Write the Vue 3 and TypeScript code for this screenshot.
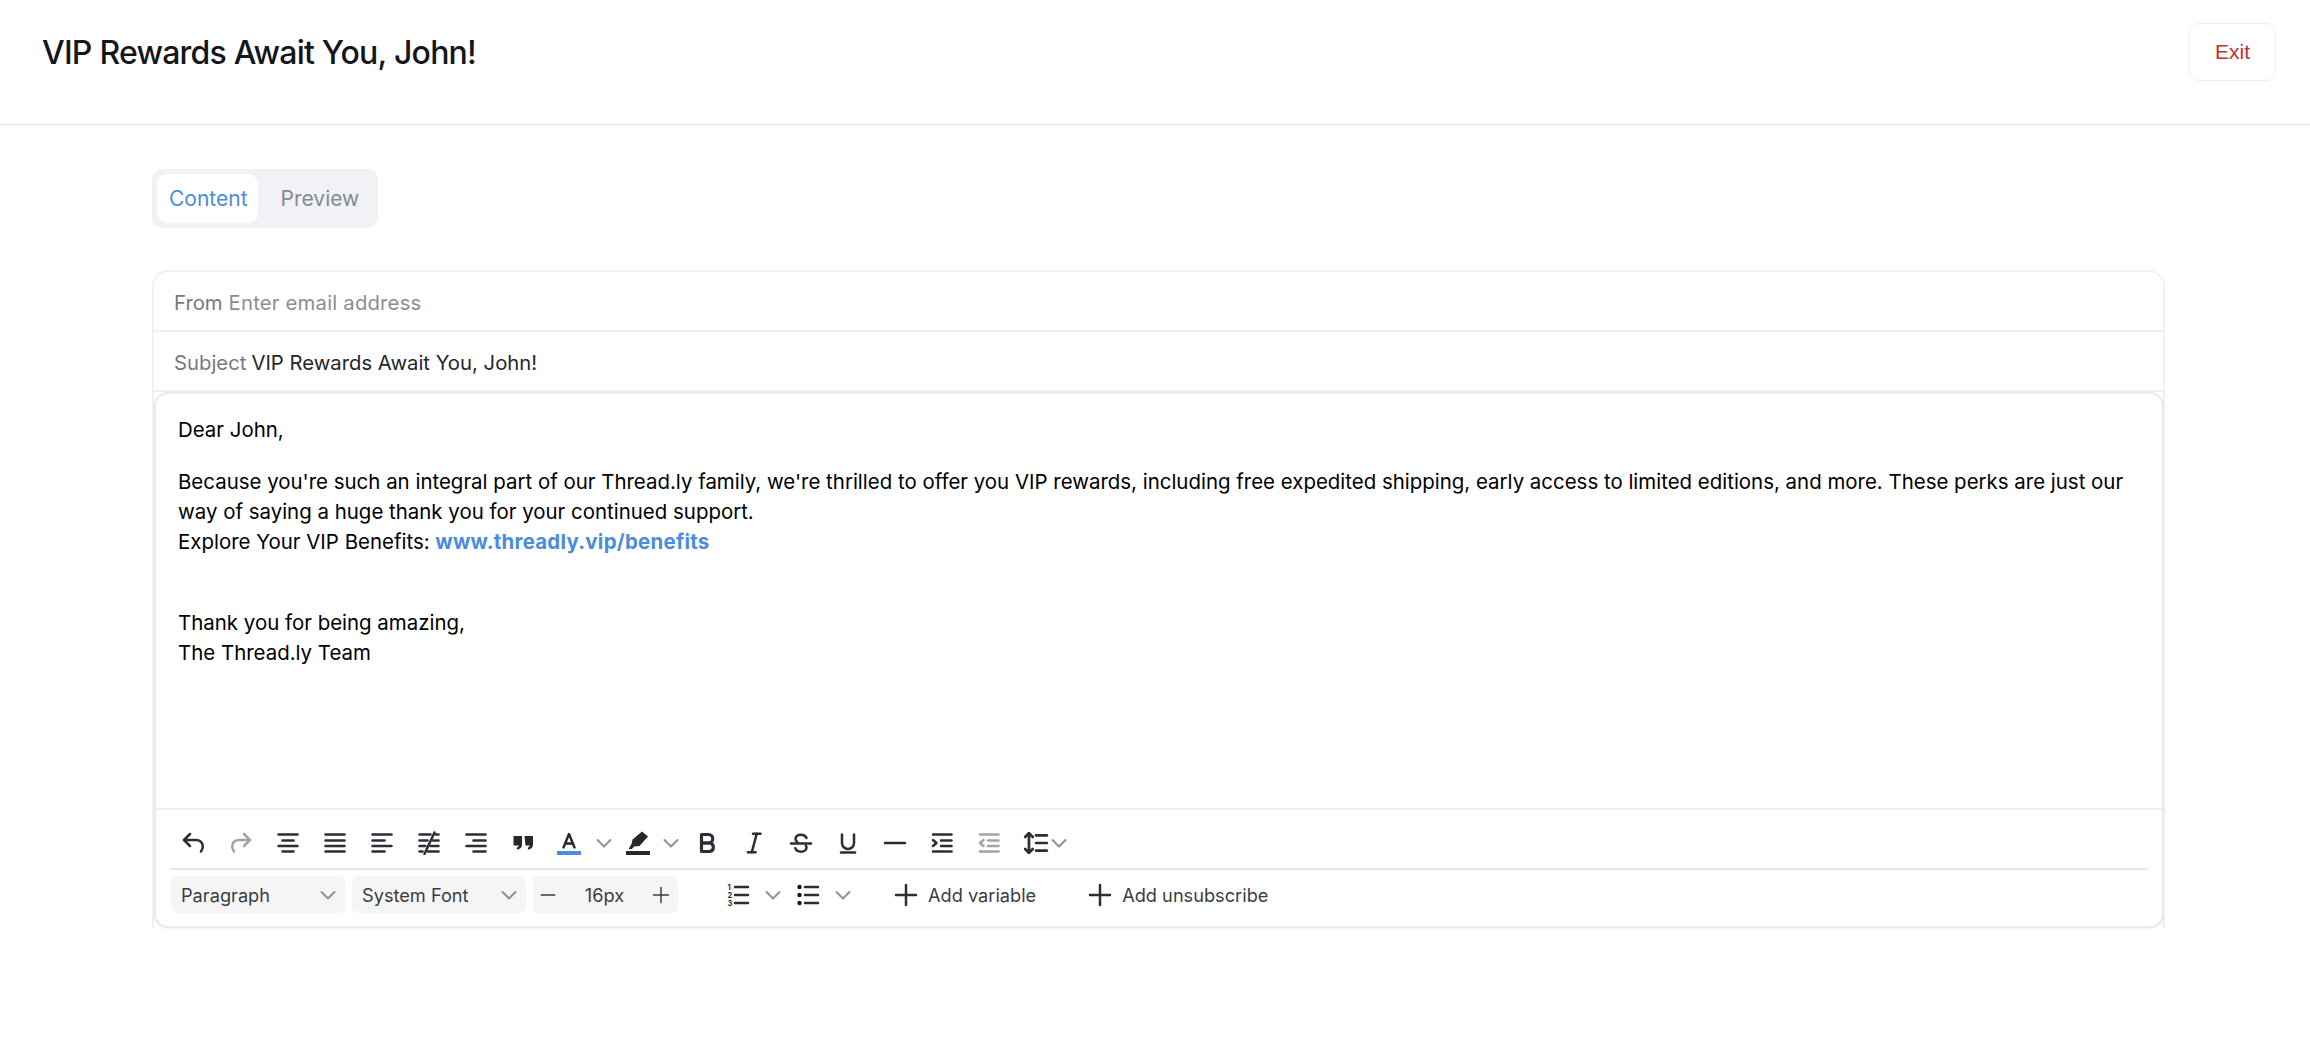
<script setup lang="ts">
interface Tool { id: string; paths: string[]; fills?: string[]; muted?: boolean; heavy?: boolean }

const row1: Tool[] = [
  { id: 'undo', paths: ['M8 3 2 9l6 6', 'M2 9h12c3.800 0 6.800 2.600 6.800 6.200 0 1.900-.7 3.700-1.800 5.300'] },
  { id: 'redo', muted: true, paths: ['M15 3l6 6-6 6', 'M21 9H10c-3.800 0-6.800 2.600-6.800 6.200 0 1.900.7 3.700 1.800 5.300'] },
  { id: 'center', paths: ['M2.500 3.500h19', 'M6.500 9.500h11', 'M2.500 15h19', 'M6.500 20.500h11'] },
  { id: 'justify', paths: ['M2.500 3.500h19', 'M2.500 9.500h19', 'M2.500 15h19', 'M2.500 20.500h19'] },
  { id: 'left', paths: ['M2.500 3.500h19', 'M2.500 9.500h12', 'M2.500 15h19', 'M2.500 20.500h12'] },
  { id: 'none', paths: ['M2.500 3.500h11', 'M18.500 3.500h3', 'M2.500 9.500h8', 'M16 9.500h5.500', 'M2.500 15h6', 'M13.500 15h8', 'M2.500 20.500h3', 'M11 20.500h10.500', 'M17.500 1.500 7.500 23'] },
  { id: 'right', paths: ['M2.500 3.500h19', 'M9.500 9.500h12', 'M2.500 15h19', 'M9.500 20.500h12'] },
  { id: 'quote', paths: [], fills: ['M2.500 5h8.500v8.500c0 2.600-1.500 4.200-4.500 5.300l-.9-1.900c1.400-.7 2.100-1.500 2.200-2.400H2.500z', 'M13.500 5H22v8.500c0 2.600-1.500 4.200-4.500 5.300l-.9-1.900c1.400-.7 2.100-1.500 2.200-2.400h-4.300z'] }
]

const row1b: Tool[] = [
  { id: 'bold', heavy: true, paths: ['M6.500 3.500h7a4.200 4.200 0 0 1 0 8.500h-7z', 'M6.500 12h8.200a4.300 4.300 0 0 1 0 8.500H6.500z'] },
  { id: 'italic', paths: ['M11 2.800h7.500', 'M6 21.200h7.500', 'M14.700 2.800 9.800 21.200'] },
  { id: 'strike', paths: ['M2 12.500h20', 'M17.500 7c-.8-2-3-3.300-5.500-3.300-3 0-5.500 1.600-5.500 4.200 0 1.300.6 2.300 1.800 3', 'M16.800 14.500c.5.700.7 1.300.7 2 0 2.600-2.500 4.200-5.500 4.200-2.800 0-5-1.300-5.700-3.500'] },
  { id: 'underline', paths: ['M6 3.500v8.500a6 6 0 0 0 12 0V3.500', 'M5 21.500h14'] },
  { id: 'hr', paths: ['M2 12h20'] },
  { id: 'indent', paths: ['M3 3.500h18.500', 'M11 9.500h10.500', 'M11 15h10.500', 'M3 20.500h18.500', 'M3 9l3.500 3L3 15'] },
  { id: 'outdent', muted: true, paths: ['M3 3.500h18.500', 'M11 9.500h10.500', 'M11 15h10.500', 'M3 20.500h18.500', 'M6.500 9 3 12l3.500 3'] }
]

const chevron = 'M5.500 9 12 15.500 18.500 9'
const lineHeightPaths = ['M5.500 3v18', 'M2 6.500 5.500 3 9 6.500', 'M2 17.500 5.500 21 9 17.500', 'M12 5h10', 'M12 12h10', 'M12 19h10']
const plusPaths = ['M12 2v20', 'M2 12h20']
</script>

<template>
  <div class="page">
    <header class="topbar">
      <h1 class="title">VIP Rewards Await You, John!</h1>
      <button class="exit" type="button">Exit</button>
    </header>

    <main class="main">
      <div class="tabs">
        <button class="tab active" type="button">Content</button>
        <button class="tab" type="button">Preview</button>
      </div>

      <section class="card">
        <div class="field"><span class="label">From</span><span class="placeholder">Enter email address</span></div>
        <div class="field"><span class="label">Subject</span><span class="value">VIP Rewards Await You, John!</span></div>

        <div class="editor">
          <div class="body">
            <p>Dear John,</p>
            <p>Because you're such an integral part of our Thread.ly family, we're thrilled to offer you VIP rewards, including free expedited shipping, early access to limited editions, and more. These perks are just our way of saying a huge thank you for your continued support.<br>Explore Your VIP Benefits: <a class="link">www.threadly.vip/benefits</a></p>
            <p class="spacer"></p>
            <p>Thank you for being amazing,<br>The Thread.ly Team</p>
          </div>

          <div class="toolbar">
            <div class="row row-icons">
              <span v-for="t in row1" :key="t.id" class="tool s47" :class="{ muted: t.muted }">
                <svg class="ico" viewBox="0 0 24 24">
                  <path v-for="d in t.paths" :key="d" :d="d" />
                  <path v-for="d in t.fills ?? []" :key="d" :d="d" class="solid" />
                </svg>
              </span>

              <span class="tool color-a">
                <svg class="ico ico-wide" viewBox="0 0 26 26">
                  <path class="glyph-a" d="M7.500 17.500 13 4l5.500 13.500M9.200 13.500h7.600" />
                  <rect x="1" y="21" width="24" height="4" class="blue" />
                </svg>
              </span>
              <span class="chev-slot s33"><svg class="chev" viewBox="0 0 24 24"><path :d="chevron" /></svg></span>

              <span class="tool s34">
                <svg class="ico ico-wide" viewBox="0 0 26 26">
                  <path class="solid" d="M17 1.500 23 6.500 14.500 16 9 16.500 7 19 3.500 19 6.500 14 7.500 9.500z" />
                  <rect x="1" y="21" width="24" height="4" class="solid" />
                </svg>
              </span>
              <span class="chev-slot s35"><svg class="chev" viewBox="0 0 24 24"><path :d="chevron" /></svg></span>

              <span v-for="t in row1b" :key="t.id" class="tool s47" :class="{ muted: t.muted, heavy: t.heavy }">
                <svg class="ico" viewBox="0 0 24 24">
                  <path v-for="d in t.paths" :key="d" :d="d" />
                </svg>
              </span>

              <span class="tool s26">
                <svg class="ico ico-wide" viewBox="0 0 24 24"><path v-for="d in lineHeightPaths" :key="d" :d="d" /></svg>
              </span>
              <span class="chev-slot s20"><svg class="chev" viewBox="0 0 24 24"><path :d="chevron" /></svg></span>
            </div>

            <div class="row row-controls">
              <div class="select"><span>Paragraph</span><svg class="chev" viewBox="0 0 24 24"><path :d="chevron" /></svg></div>
              <div class="select"><span>System Font</span><svg class="chev" viewBox="0 0 24 24"><path :d="chevron" /></svg></div>
              <div class="size">
                <svg class="mini" viewBox="0 0 24 24"><path d="M3 12h18" /></svg>
                <span>16px</span>
                <svg class="mini" viewBox="0 0 24 24"><path :d="plusPaths[0]" /><path :d="plusPaths[1]" /></svg>
              </div>

              <div class="lists">
                <svg class="ico" viewBox="0 0 24 24">
                  <path d="M9 4h13" /><path d="M9 12h13" /><path d="M9 20h13" />
                  <text x="1.500" y="7" class="num">1</text><text x="1.500" y="15" class="num">2</text><text x="1.500" y="23" class="num">3</text>
                </svg>
                <svg class="chev" viewBox="0 0 24 24"><path :d="chevron" /></svg>
                <svg class="ico" viewBox="0 0 24 24">
                  <path d="M9 4h13" /><path d="M9 12h13" /><path d="M9 20h13" />
                  <circle class="solid" cx="3.500" cy="4" r="2.200" /><circle class="solid" cx="3.500" cy="12" r="2.200" /><circle class="solid" cx="3.500" cy="20" r="2.200" />
                </svg>
                <svg class="chev" viewBox="0 0 24 24"><path :d="chevron" /></svg>
              </div>

              <div class="add first">
                <svg class="ico" viewBox="0 0 24 24"><path :d="plusPaths[0]" /><path :d="plusPaths[1]" /></svg>
                <span>Add variable</span>
              </div>
              <div class="add">
                <svg class="ico" viewBox="0 0 24 24"><path :d="plusPaths[0]" /><path :d="plusPaths[1]" /></svg>
                <span>Add unsubscribe</span>
              </div>
            </div>
          </div>
        </div>
      </section>
    </main>
  </div>
</template>

<style>
html, body { margin: 0; background: #fff; }
</style>

<style scoped>
.page {
  min-height: 1043px;
  background: #fff;
  font-family: Inter, "Liberation Sans", sans-serif;
  color: #14161a;
}
.topbar {
  box-sizing: border-box;
  height: 125px;
  display: flex;
  justify-content: space-between;
  align-items: flex-start;
  padding: 23px 34px 0 42px;
  border-bottom: 1px solid #e6e7e9;
}
.title {
  margin: 0;
  padding-top: 10px;
  font-size: 32px;
  line-height: 40px;
  font-weight: 500;
  letter-spacing: -0.77px;
  color: #14161a;
}
.exit {
  width: 87px;
  height: 58px;
  background: #fff;
  border: 1px solid #eeeff1;
  border-radius: 10px;
  color: #c0322b;
  font: 400 21px "Liberation Sans", Arial, sans-serif;
  padding: 0;
}
.main { padding: 44px 145px 0 152px; }
.tabs {
  box-sizing: border-box;
  width: 226px;
  height: 59px;
  display: flex;
  gap: 11px;
  padding: 5px;
  background: #f1f2f5;
  border-radius: 10px;
}
.tab {
  border: 0;
  background: transparent;
  border-radius: 10px;
  padding: 0 12px;
  height: 49px;
  font: 400 21px Inter, sans-serif;
  color: #858a94;
}
.tab.active { background: #fff; color: #4a8ddc; padding-right: 10px; }
.card {
  box-sizing: border-box;
  margin-top: 42px;
  border: 2px solid #f0f1f3;
  border-bottom: 0;
  border-radius: 16px 16px 0 0;
}
.field {
  box-sizing: border-box;
  height: 60px;
  display: flex;
  align-items: center;
  gap: 5px;
  padding: 2px 20px 0;
  border-bottom: 2px solid #eeeff1;
  font-size: 20.300px;
}
.label { color: #757982; }
.placeholder { color: #8a8e96; letter-spacing: 0.2px; margin-left: 1px; }
.value { color: #24262b; }
.editor {
  box-sizing: border-box;
  height: 536px;
  margin: 0 -1px 0 0;
  border: 2px solid #e9eaec;
  border-radius: 14px;
  display: flex;
  flex-direction: column;
  background: #fff;
  box-shadow: 0 1px 2px rgba(0, 0, 0, .05);
}
.body {
  flex: 1;
  padding: 21px 22px 0;
  font-size: 20.450px;
  line-height: 30px;
  color: #000;
}
.body p { margin: 0 0 22px; }
.body .spacer { margin: 0; height: 29px; }
.link { color: #4a8ddc; font-weight: 700; letter-spacing: 0.25px; }
.toolbar {
  box-sizing: border-box;
  height: 118px;
  border-top: 2px solid #eeeff1;
  padding: 0 14px;
}
.row { display: flex; align-items: center; }
.row-icons {
  box-sizing: border-box;
  height: 60px;
  border-bottom: 2px solid #e6e7e9;
  padding: 8px 0 0 12px;
}
.row-controls { height: 49px; gap: 7px; padding-left: 1px; }
.tool { display: flex; align-items: center; flex: none; }
.s47 { width: 47px; }
.s34 { width: 34px; }
.s33 { width: 33px; }
.s35 { width: 35.500px; }
.s26 { width: 24px; margin-left: -1px; }
.s20 { width: 24px; }
.color-a { width: 36px; margin-left: -2px; }
.chev-slot { display: flex; align-items: center; }
.ico {
  width: 24px;
  height: 24px;
  flex: none;
  fill: none;
  stroke: #2b2e35;
  stroke-width: 2.500;
  stroke-linecap: round;
  stroke-linejoin: round;
}
.ico-wide { width: 26px; height: 26px; }
.heavy .ico { stroke-width: 3.200; }
.muted .ico { stroke: #a2a4a8; }
.solid { fill: #14161a; stroke: none; }
.tool:not(.muted) .solid { fill: #26282e; }
.blue { fill: #4a8ddc; stroke: none; }
.glyph-a { stroke: #26282e; stroke-width: 2.400; fill: none; }
.num { font: 700 7.500px Inter, sans-serif; fill: #2b2e35; stroke: none; }
.chev {
  width: 24px;
  height: 24px;
  flex: none;
  fill: none;
  stroke: #8f9196;
  stroke-width: 2;
  stroke-linecap: round;
  stroke-linejoin: round;
}
.select, .size {
  box-sizing: border-box;
  height: 37px;
  display: flex;
  align-items: center;
  justify-content: space-between;
  background: #f5f5f6;
  border-radius: 6px;
  font-size: 18.200px;
  color: #3a3d44;
}
.select { width: 174px; padding: 0 5px 0 10px; }
.size { width: 145px; padding: 0 8px 0 6px; }
.mini {
  width: 18px;
  height: 18px;
  fill: none;
  stroke: #3a3d44;
  stroke-width: 2;
  stroke-linecap: round;
}
.lists {
  display: flex;
  align-items: center;
  margin-left: 41px;
  gap: 11px;
}
.add { display: flex; align-items: center; gap: 10px; font-size: 18.200px; color: #3a3d44; margin-left: 45px; }
.add.first { margin-left: 32px; }
</style>
